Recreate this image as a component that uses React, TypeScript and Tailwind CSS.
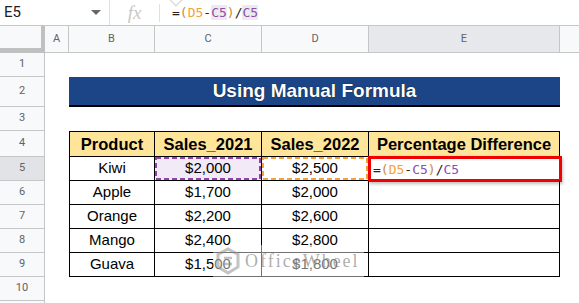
import React from "react";

const HDR = "bg-[#f8f9fa]";
const LINE = "border-[#c4c7c5]";

function Formula({ bgRefs }: { bgRefs?: boolean }) {
  const hl = bgRefs ? "bg-[#ececec]" : "";
  return (
    <span className="font-['DejaVu_Sans_Mono',monospace] text-[13px] text-[#222] whitespace-pre">
      =<span className="text-[#c98a3a]">(</span>
      <span className="text-[#f4a338]">D5</span>-
      <span className={`text-[#8e4bb0] ${hl}`}>C5</span>
      <span className="text-[#c98a3a]">)</span>/
      <span className={`text-[#8e4bb0] ${hl}`}>C5</span>
    </span>
  );
}

function DashBox({ color }: { color: string }) {
  return (
    <svg className="absolute left-0 top-0 w-full h-full pointer-events-none" preserveAspectRatio="none">
      <rect x="1" y="1" width="calc(100% - 2px)" height="calc(100% - 2px)" fill="none" stroke={color} strokeWidth="2" strokeDasharray="5 3" />
    </svg>
  );
}

function RowHead({ n, h, active }: { n?: number; h: string; active?: boolean }) {
  return (
    <div
      className={`w-[45px] shrink-0 ${h} ${active ? "bg-[#e1e3e6]" : HDR} border-r border-b ${LINE} flex items-center justify-center text-[11px] text-[#5f6368] font-['Roboto',sans-serif]`}
    >
      {n}
    </div>
  );
}

const data = [
  ["Kiwi", "$2,000", "$2,500"],
  ["Apple", "$1,700", "$2,000"],
  ["Orange", "$2,200", "$2,600"],
  ["Mango", "$2,400", "$2,800"],
  ["Guava", "$1,500", "$1,800"],
];

export default function App() {
  const cell = "flex items-center justify-center text-[15px] text-black";
  return (
    <div className="w-[579px] h-[303px] overflow-hidden bg-white relative font-['Liberation_Sans',Arial,sans-serif]">
      {/* formula bar */}
      <div className={`h-[26px] flex items-center border-b ${LINE} bg-white relative`}>
        <div className="w-[110px] h-full flex items-center justify-between pl-[4px] pr-[8px] border-r border-[#e0e0e0]">
          <span className="text-[15px] text-[#202124] font-['Roboto',sans-serif]">E5</span>
          <span className="w-0 h-0 border-l-[5px] border-r-[5px] border-t-[5px] border-l-transparent border-r-transparent border-t-[#666]" />
        </div>
        <div className="w-[50px] h-[18px] flex items-center justify-center border-r border-[#e0e0e0]">
          <span className="font-['Liberation_Serif',serif] italic text-[19px] text-[#c8c8c8] leading-none">fx</span>
        </div>
        <div className="pl-[12px] flex items-center">
          <Formula bgRefs />
        </div>
        <div className="absolute left-[170px] top-[-8px] w-[12px] h-[12px] rotate-45 bg-white border-r border-b border-[#d0d0d0]" />
      </div>

      {/* column headers */}
      <div className="flex h-[27px]">
        <div className={`w-[45px] shrink-0 ${HDR} border-r-[4px] border-b-[5px] border-[#c0c0c0]`} />
        {[
          ["A", "w-[24px]", false],
          ["B", "w-[86px]", false],
          ["C", "w-[107px]", false],
          ["D", "w-[107px]", false],
          ["E", "w-[191px]", true],
        ].map(([l, w, a]) => (
          <div
            key={l as string}
            className={`${w} shrink-0 ${a ? "bg-[#e6e8eb]" : HDR} border-r border-b ${LINE} flex items-center justify-center text-[11px] text-[#5f6368] font-['Roboto',sans-serif]`}
          >
            {l as string}
          </div>
        ))}
        <div className={`flex-1 ${HDR} border-b ${LINE}`} />
      </div>

      {/* row 1 */}
      <div className="flex">
        <RowHead n={1} h="h-[24px]" />
      </div>
      {/* row 2 title */}
      <div className="flex">
        <RowHead n={2} h="h-[30px]" />
        <div className="w-[24px]" />
        <div className="w-[491px] h-[30px] bg-[#1c4587] border-b-2 border-black flex items-center justify-center">
          <span className="text-white font-bold text-[19px] [text-shadow:0_0_1px_#000]">Using Manual Formula</span>
        </div>
      </div>
      {/* row 3 */}
      <div className="flex">
        <RowHead n={3} h="h-[24px]" />
      </div>
      {/* row 4 header */}
      <div className="flex">
        <RowHead n={4} h="h-[26px]" />
        <div className="w-[24px]" />
        {[
          ["Product", "w-[86px] border-l"],
          ["Sales_2021", "w-[107px]"],
          ["Sales_2022", "w-[107px]"],
          ["Percentage Difference", "w-[191px]"],
        ].map(([t, w]) => (
          <div
            key={t}
            className={`${w} h-[26px] bg-[#ffe599] border-t border-r border-b border-black flex items-center justify-center font-bold text-[16.5px] text-black`}
          >
            {t}
          </div>
        ))}
      </div>
      {/* data rows */}
      {data.map((r, i) => (
        <div className="flex" key={r[0]}>
          <RowHead n={5 + i} h="h-[24px]" active={i === 0} />
          <div className="w-[24px]" />
          <div className={`w-[86px] h-[24px] border-l border-r border-b border-black ${cell}`}>{r[0]}</div>
          <div className={`w-[107px] h-[24px] border-r border-b border-black relative ${cell} ${i === 0 ? "bg-[#f3eaf7]" : ""}`}>
            {r[1]}
            {i === 0 && <DashBox color="#8e44ad" />}
          </div>
          <div className={`w-[107px] h-[24px] border-r border-b border-black relative ${cell}`}>
            {r[2]}
            {i === 0 && <DashBox color="#f6a33a" />}
          </div>
          <div className="w-[191px] h-[24px] border-r border-b border-black relative flex items-center">
            {i === 0 && (
              <>
                <div className="pl-[4px]">
                  <Formula />
                </div>
                <div className="absolute left-[-1px] top-[-1px] right-[-3px] bottom-[-2px] border-[3px] border-[#f00000] shadow-[1px_2px_3px_rgba(0,0,0,0.25)]" />
              </>
            )}
          </div>
        </div>
      ))}
      {/* row 10 */}
      <div className="flex">
        <RowHead n={10} h="h-[24px]" />
      </div>
      <div className="flex">
        <RowHead h="h-[24px]" />
      </div>

      {/* watermark */}
      <div className="absolute left-[213px] top-[245px] w-[151px] h-[32px] bg-white/45 flex items-center gap-[4px] pl-[2px] pointer-events-none">
        <svg width="26" height="28" viewBox="0 0 26 28" className="opacity-50">
          <path d="M13 2 L23 7.5 L23 20 L13 26 L3 20 L3 7.5 Z" fill="none" stroke="#888" strokeWidth="3" />
          <path d="M9 11 L17 11 M9 17 L17 17" stroke="#888" strokeWidth="2.5" />
        </svg>
        <span className="font-['Liberation_Serif',serif] text-[18px] tracking-[2px] text-[#8a8a8a]/70">OfficeWheel</span>
      </div>
    </div>
  );
}
